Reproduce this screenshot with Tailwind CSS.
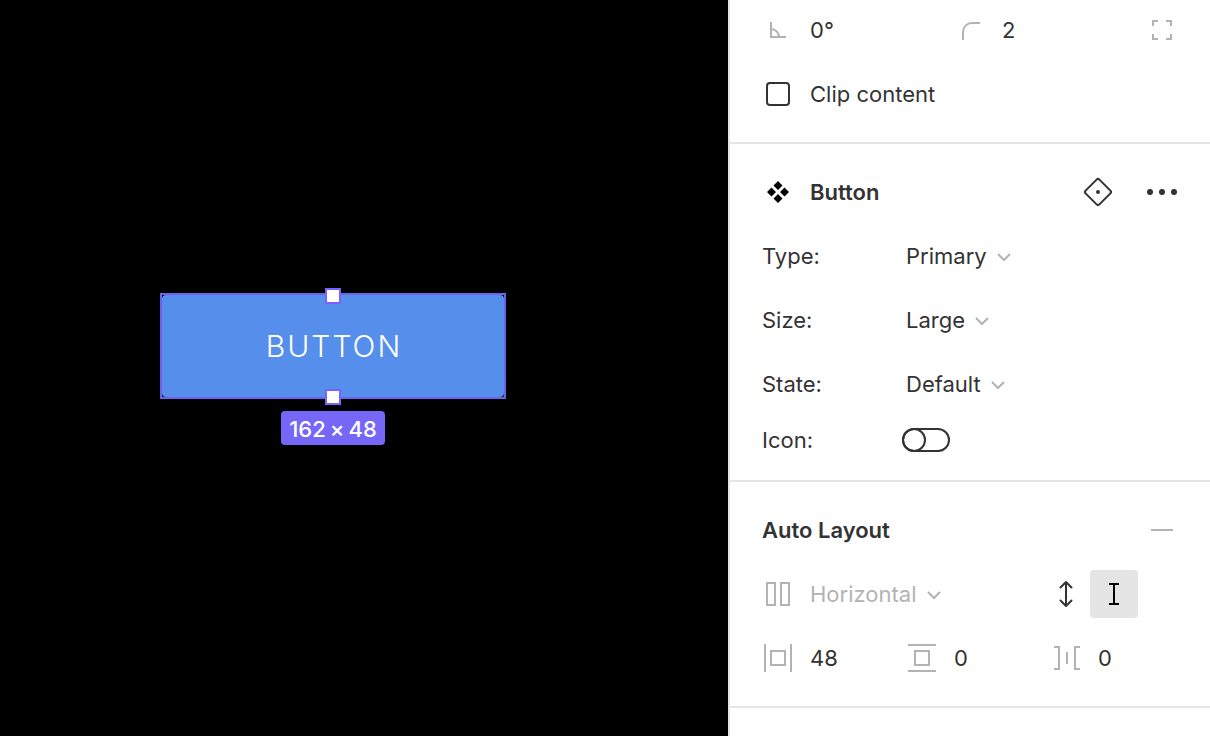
<!DOCTYPE html>
<html lang="en">
<head>
  <meta charset="UTF-8" />
  <meta name="viewport" content="width=device-width, initial-scale=1.0"/>
  <title>Button - Design Editor</title>
  <script src="https://cdn.jsdelivr.net/npm/@tailwindcss/browser@4"></script>
</head>
<body class="flex min-h-screen bg-black font-['Inter',sans-serif] text-[22px] leading-8 text-[#333333]">

  <!-- Canvas -->
  <main class="relative flex-1 overflow-hidden bg-black">
    <div class="absolute left-[160px] top-[293px] w-[346px]">
      <div class="relative h-[106px] border-2 border-[#7060ea] bg-black">
        <button type="button" class="h-full w-full rounded-sm bg-[#568eeb] pl-0.5 text-3xl font-light tracking-[2px] text-white">BUTTON</button>
        <span class="absolute -top-[7px] left-1/2 size-4 -translate-x-1/2 border-2 border-[#7b61ff] bg-white"></span>
        <span class="absolute -bottom-[8px] left-1/2 size-4 -translate-x-1/2 border-2 border-[#7b61ff] bg-white"></span>
      </div>
      <div class="mt-3 flex justify-center">
        <span class="flex gap-1 rounded-sm bg-[#7767f8] px-2 pt-0.5 font-medium text-white">
          <span>162</span>
          <span>×</span>
          <span>48</span>
        </span>
      </div>
    </div>
  </main>

  <!-- Properties panel -->
  <aside class="w-[482px] shrink-0 border-l-2 border-[#e5e5e5] bg-white">

    <!-- Rotation, radius, clipping -->
    <section class="flex flex-col gap-4 border-b-2 border-[#e5e5e5] px-8 pt-[6px] pb-6">
      <div class="grid h-12 grid-cols-[192px_192px_1fr] items-center">
        <label class="flex items-center gap-4">
          <svg class="size-8 shrink-0 text-[#b3b3b3]" viewBox="0 0 32 32" fill="none" stroke="currentColor" stroke-width="2" role="img" aria-label="Rotation">
            <path d="M9 8v15h15M9 15a8 8 0 0 1 8 8" />
          </svg>
          <input type="text" value="0°" class="w-full min-w-0 outline-none" />
        </label>
        <label class="flex items-center gap-4">
          <svg class="size-8 shrink-0 text-[#b3b3b3]" viewBox="0 0 32 32" fill="none" stroke="currentColor" stroke-width="2" role="img" aria-label="Corner radius">
            <path d="M9 26v-8a9 9 0 0 1 9-9h8" />
          </svg>
          <input type="text" value="2" class="w-full min-w-0 outline-none" />
        </label>
        <button type="button" aria-label="Independent corners" class="text-[#b3b3b3]">
          <svg class="size-8" viewBox="0 0 32 32" fill="none" stroke="currentColor" stroke-width="2">
            <path d="M7 12V7h5M20 7h5v5M25 20v5h-5M12 25H7v-5" />
          </svg>
        </button>
      </div>
      <label class="flex h-12 items-center gap-4">
        <span class="flex w-8 justify-center">
          <input type="checkbox" class="size-6 appearance-none rounded-sm border-2 border-[#333333] checked:bg-[#333333]" />
        </span>
        Clip content
      </label>
    </section>

    <!-- Component properties -->
    <section class="border-b-2 border-[#e5e5e5] px-8 pt-6 pb-4">
      <div class="flex h-12 items-center gap-4">
        <svg class="size-8 text-black" viewBox="0 0 32 32" fill="currentColor" aria-hidden="true">
          <path d="M16 5l4.500 4.500L16 14l-4.500-4.500zM16 18l4.500 4.500L16 27l-4.500-4.500zM9.500 11.500L14 16l-4.500 4.500L5 16zM22.500 11.500L27 16l-4.500 4.500L18 16z" />
        </svg>
        <h2 class="font-semibold">Button</h2>
        <div class="ml-auto flex gap-8">
          <button type="button" aria-label="Go to main component">
            <svg class="size-8" viewBox="0 0 32 32" fill="none" stroke="currentColor" stroke-width="2">
              <path d="M14.600 3.600a2 2 0 0 1 2.800 0l11 11a2 2 0 0 1 0 2.800l-11 11a2 2 0 0 1-2.800 0l-11-11a2 2 0 0 1 0-2.800z" />
              <circle cx="16" cy="16" r="2" fill="currentColor" stroke="none" />
            </svg>
          </button>
          <button type="button" aria-label="More options">
            <svg class="size-8" viewBox="0 0 32 32" fill="currentColor">
              <circle cx="4" cy="16" r="3" />
              <circle cx="16" cy="16" r="3" />
              <circle cx="28" cy="16" r="3" />
            </svg>
          </button>
        </div>
      </div>

      <div class="mt-4 flex h-12 items-center">
        <label for="type" class="w-36">Type:</label>
        <div class="relative">
          <select id="type" class="field-sizing-content appearance-none pr-[25px] outline-none">
            <option>Primary</option>
          </select>
          <svg class="pointer-events-none absolute top-3 right-0 h-[10px] w-4 text-[#b3b3b3]" viewBox="0 0 16 10" fill="none" stroke="currentColor" stroke-width="2"><path d="M2 2l6 6 6-6" /></svg>
        </div>
      </div>
      <div class="mt-4 flex h-12 items-center">
        <label for="size" class="w-36">Size:</label>
        <div class="relative">
          <select id="size" class="field-sizing-content appearance-none pr-[25px] outline-none">
            <option>Large</option>
          </select>
          <svg class="pointer-events-none absolute top-3 right-0 h-[10px] w-4 text-[#b3b3b3]" viewBox="0 0 16 10" fill="none" stroke="currentColor" stroke-width="2"><path d="M2 2l6 6 6-6" /></svg>
        </div>
      </div>
      <div class="mt-4 flex h-12 items-center">
        <label for="state" class="w-36">State:</label>
        <div class="relative">
          <select id="state" class="field-sizing-content appearance-none pr-[25px] outline-none">
            <option>Default</option>
          </select>
          <svg class="pointer-events-none absolute top-3 right-0 h-[10px] w-4 text-[#b3b3b3]" viewBox="0 0 16 10" fill="none" stroke="currentColor" stroke-width="2"><path d="M2 2l6 6 6-6" /></svg>
        </div>
      </div>
      <div class="mt-2 flex h-12 items-center">
        <label for="icon" class="w-[140px]">Icon:</label>
        <input id="icon" type="checkbox" role="switch" class="flex h-6 w-12 appearance-none rounded-full border-2 border-[#333333] before:-m-[2px] before:size-6 before:rounded-full before:border-2 before:border-[#333333] checked:justify-end" />
      </div>
    </section>

    <!-- Auto layout -->
    <section class="flex flex-col gap-4 border-b-2 border-[#e5e5e5] px-8 py-6">
      <div class="flex h-12 items-center justify-between">
        <h2 class="font-semibold">Auto Layout</h2>
        <button type="button" aria-label="Remove auto layout" class="text-[#b3b3b3]">
          <svg class="size-8" viewBox="0 0 32 32" fill="none" stroke="currentColor" stroke-width="2"><path d="M5 16h22" /></svg>
        </button>
      </div>
      <div class="flex h-12 items-center text-[#b3b3b3]">
        <svg class="mr-4 size-8" viewBox="0 0 32 32" fill="none" stroke="currentColor" stroke-width="2" aria-hidden="true">
          <path d="M5 5h8v22H5zM19 5h8v22h-8z" />
        </svg>
        <div class="relative">
          <select aria-label="Direction" class="field-sizing-content appearance-none pr-[25px] outline-none">
            <option>Horizontal</option>
          </select>
          <svg class="pointer-events-none absolute top-3 right-0 h-[10px] w-4" viewBox="0 0 16 10" fill="none" stroke="currentColor" stroke-width="2"><path d="M2 2l6 6 6-6" /></svg>
        </div>
        <div class="mr-10 ml-auto flex">
          <button type="button" aria-label="Hug height" class="flex size-12 items-center justify-center rounded-sm text-[#333333]">
            <svg class="size-8" viewBox="0 0 32 32" fill="none" stroke="currentColor" stroke-width="2" stroke-linecap="round" stroke-linejoin="round">
              <path d="M16 4v24M10.500 9.500L16 4l5.500 5.500M10.500 22.500L16 28l5.500-5.500" />
            </svg>
          </button>
          <button type="button" aria-label="Fixed height" aria-pressed="true" class="flex size-12 items-center justify-center rounded-sm bg-[#e5e5e5] text-black">
            <svg class="size-8" viewBox="0 0 32 32" fill="none" stroke="currentColor" stroke-width="2">
              <path d="M11 6h10M11 26h10M16 6v20" />
            </svg>
          </button>
        </div>
      </div>
      <div class="grid h-12 grid-cols-[144px_144px_1fr] items-center">
        <label class="flex items-center gap-4">
          <svg class="size-8 shrink-0 text-[#b3b3b3]" viewBox="0 0 32 32" fill="none" stroke="currentColor" stroke-width="2" role="img" aria-label="Horizontal padding">
            <path d="M3 2v28M29 2v28M9 9h14v14H9z" />
          </svg>
          <input type="text" value="48" class="w-full min-w-0 outline-none" />
        </label>
        <label class="flex items-center gap-4">
          <svg class="size-8 shrink-0 text-[#b3b3b3]" viewBox="0 0 32 32" fill="none" stroke="currentColor" stroke-width="2" role="img" aria-label="Vertical padding">
            <path d="M2 3h28M2 29h28M9 9h14v14H9z" />
          </svg>
          <input type="text" value="0" class="w-full min-w-0 outline-none" />
        </label>
        <label class="flex items-center gap-4">
          <svg class="size-8 shrink-0 text-[#b3b3b3]" viewBox="0 0 32 32" fill="none" stroke="currentColor" stroke-width="2" role="img" aria-label="Spacing between items">
            <path d="M4 5h5v22H4M30 5h-5v22h5M17 10v12" />
          </svg>
          <input type="text" value="0" class="w-full min-w-0 outline-none" />
        </label>
      </div>
    </section>
  </aside>

</body>
</html>
